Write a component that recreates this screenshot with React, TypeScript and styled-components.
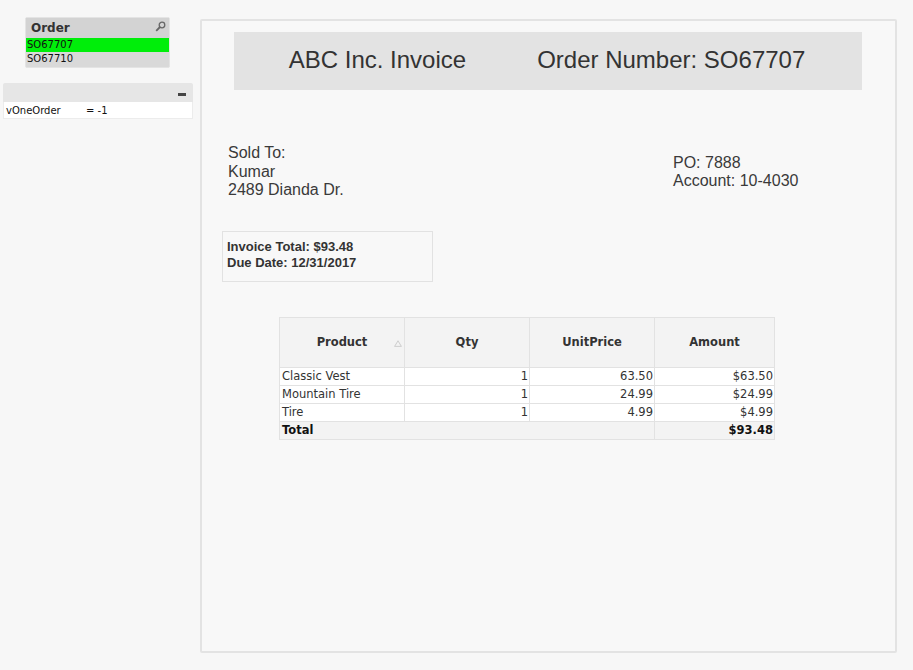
import React from "react";
import styled, { createGlobalStyle } from "styled-components";

const GlobalStyle = createGlobalStyle`
  html, body {
    margin: 0;
    padding: 0;
    background: #f7f7f7;
  }
  body {
    font-family: "DejaVu Sans", sans-serif;
    color: #333;
  }
`;

const orders = [
  { id: "SO67707", selected: true },
  { id: "SO67710", selected: false },
];

const lines = [
  { product: "Classic Vest", qty: 1, price: "63.50", amount: "$63.50" },
  { product: "Mountain Tire", qty: 1, price: "24.99", amount: "$24.99" },
  { product: "Tire", qty: 1, price: "4.99", amount: "$4.99" },
];

const App = () => {
  return (
    <>
      <GlobalStyle />
      <Page>
        <Sidebar>
          <ListBox>
            <ListHeader>
              <span>Order</span>
              <svg width="11" height="11" viewBox="0 0 11 11">
                <circle cx="7" cy="4" r="2.8" fill="none" stroke="#666" strokeWidth="1.3" />
                <line x1="5" y1="6" x2="1.2" y2="9.8" stroke="#666" strokeWidth="1.8" />
              </svg>
            </ListHeader>
            {orders.map((o) => (
              <ListItem key={o.id} $selected={o.selected}>
                {o.id}
              </ListItem>
            ))}
          </ListBox>

          <VarBox>
            <VarHeader>
              <MinimizeBar />
            </VarHeader>
            <VarRow>
              <VarName>vOneOrder</VarName>
              <span>= -1</span>
            </VarRow>
          </VarBox>
        </Sidebar>

        <Panel>
          <TitleBar>
            <span>ABC Inc. Invoice</span>
            <span>Order Number: SO67707</span>
          </TitleBar>

          <Details>
            <AddressBlock>
              <div>Sold To:</div>
              <div>Kumar</div>
              <div>2489 Dianda Dr.</div>
            </AddressBlock>
            <AccountBlock>
              <div>PO: 7888</div>
              <div>Account: 10-4030</div>
            </AccountBlock>
          </Details>

          <TotalBox>
            <div>Invoice Total: $93.48</div>
            <div>Due Date: 12/31/2017</div>
          </TotalBox>

          <Table>
            <colgroup>
              <col style={{ width: 125 }} />
              <col style={{ width: 125 }} />
              <col style={{ width: 125 }} />
              <col style={{ width: 120 }} />
            </colgroup>
            <thead>
              <tr>
                <HeadCell>
                  Product
                  <SortMark width="8" height="7" viewBox="0 0 8 7">
                    <path d="M4 0.8 L7.4 6.4 L0.6 6.4 Z" fill="none" stroke="#c8c8c8" strokeWidth="0.9" />
                  </SortMark>
                </HeadCell>
                <HeadCell>Qty</HeadCell>
                <HeadCell>UnitPrice</HeadCell>
                <HeadCell>Amount</HeadCell>
              </tr>
            </thead>
            <tbody>
              {lines.map((l) => (
                <tr key={l.product}>
                  <Cell>{l.product}</Cell>
                  <Cell $right>{l.qty}</Cell>
                  <Cell $right>{l.price}</Cell>
                  <Cell $right>{l.amount}</Cell>
                </tr>
              ))}
              <tr>
                <TotalCell colSpan={3}>Total</TotalCell>
                <TotalCell $right>$93.48</TotalCell>
              </tr>
            </tbody>
          </Table>
        </Panel>
      </Page>
    </>
  );
};

const Page = styled.div`
  display: flex;
  align-items: flex-start;
  width: 913px;
  height: 670px;
`;

const Sidebar = styled.div`
  width: 200px;
  display: flex;
  flex-direction: column;
  padding-top: 17px;
`;

const ListBox = styled.div`
  margin-left: 25px;
  width: 143px;
  background: #d9d9d9;
  border: 1px solid #e4e4e4;
  border-radius: 2px;
  padding-bottom: 1px;
`;

const ListHeader = styled.div`
  height: 20px;
  background: #d3d3d3;
  display: flex;
  align-items: center;
  justify-content: space-between;
  padding: 0 3px 0 5px;
  font-weight: bold;
  font-size: 12px;
  color: #333;

  svg {
    margin-top: -3px;
  }
`;

const ListItem = styled.div<{ $selected?: boolean }>`
  height: 14px;
  line-height: 14px;
  padding-left: 1px;
  font-size: 10px;
  color: #111;
  background: ${(p) => (p.$selected ? "#00ee0a" : "#d9d9d9")};
`;

const VarBox = styled.div`
  margin-left: 3px;
  margin-top: 15px;
  width: 190px;
`;

const VarHeader = styled.div`
  height: 19px;
  background: #e6e6e6;
  border-radius: 2px 2px 0 0;
  display: flex;
  justify-content: flex-end;
  align-items: flex-end;
  padding: 0 7px 6px 0;
  box-sizing: border-box;
`;

const MinimizeBar = styled.div`
  width: 8px;
  height: 3px;
  background: #444;
`;

const VarRow = styled.div`
  height: 16px;
  background: #fff;
  border: 1px solid #ececec;
  border-top: none;
  display: flex;
  align-items: center;
  padding-left: 2px;
  font-size: 10px;
  color: #111;
`;

const VarName = styled.span`
  width: 80px;
`;

const Panel = styled.div`
  margin-top: 19px;
  width: 697px;
  height: 634px;
  box-sizing: border-box;
  border: 2px solid #e3e3e3;
  border-radius: 2px;
  background: #f8f8f8;
  padding-top: 11px;
  display: flex;
  flex-direction: column;
`;

const TitleBar = styled.div`
  margin-left: 32px;
  width: 628px;
  height: 58px;
  background: #e3e3e3;
  display: flex;
  align-items: center;
  justify-content: center;
  gap: 71px;
  padding-bottom: 3px;
  padding-right: 2px;
  box-sizing: border-box;
  font-family: "Liberation Sans", Arial, sans-serif;
  font-size: 24px;
  color: #333;
`;

const Details = styled.div`
  display: grid;
  grid-template-columns: 445px auto;
  margin-top: 54px;
  margin-left: 26px;
  font-family: "Liberation Sans", Arial, sans-serif;
  font-size: 16px;
  line-height: 18.5px;
  color: #3a3a3a;
`;

const AddressBlock = styled.div``;

const AccountBlock = styled.div`
  padding-top: 9.5px;
`;

const TotalBox = styled.div`
  margin-top: 31px;
  margin-left: 20px;
  width: 211px;
  height: 51px;
  box-sizing: border-box;
  border: 1px solid #e2e2e2;
  padding: 7px 0 0 4px;
  font-family: "Liberation Sans", Arial, sans-serif;
  font-weight: bold;
  font-size: 13px;
  line-height: 16px;
  color: #333;
`;

const Table = styled.table`
  margin-top: 35px;
  margin-left: 77px;
  width: 495px;
  border-collapse: collapse;
  table-layout: fixed;
  font-size: 11.5px;
`;

const HeadCell = styled.th`
  position: relative;
  height: 49px;
  padding: 0;
  background: #f3f3f3;
  border: 1px solid #e2e2e2;
  font-weight: bold;
  color: #333;
  text-align: center;
`;

const SortMark = styled.svg`
  position: absolute;
  right: 2px;
  top: 22px;
`;

const Cell = styled.td<{ $right?: boolean }>`
  height: 17px;
  padding: 0 1px 0 2px;
  background: #fff;
  border: 1px solid #e2e2e2;
  color: #333;
  text-align: ${(p) => (p.$right ? "right" : "left")};
  white-space: nowrap;
  overflow: hidden;
`;

const TotalCell = styled(Cell)`
  background: #f3f3f3;
  font-weight: bold;
  color: #111;
`;

export default App;
